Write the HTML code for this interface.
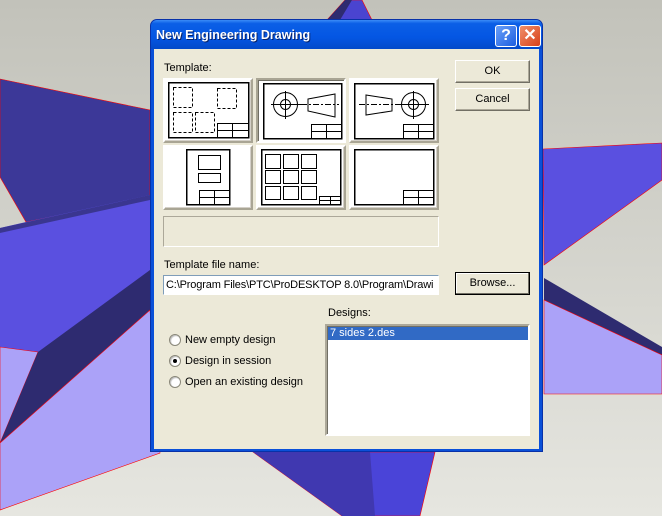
<!DOCTYPE html>
<html><head><meta charset="utf-8"><style>
*{margin:0;padding:0;box-sizing:border-box}
body{width:662px;height:516px;overflow:hidden;position:relative;font-family:"Liberation Sans",sans-serif;font-size:11px;color:#000;background:#cfcfc8}
.a{position:absolute}
.dlg{left:150px;top:19px;width:393px;height:433px;background:#0a50d8;border-radius:7px 7px 0 0;border:1px solid #0831a8}
.client{left:3px;top:29px;width:385px;height:400px;background:#ece9d8}
.title{left:0;top:0;width:391px;height:29px;border-radius:6px 6px 0 0;background:linear-gradient(#3b8cf7 0,#0b5fe6 12%,#0456e3 60%,#0349c9 100%)}
.title span{position:absolute;left:5px;top:8px;color:#fff;font-weight:bold;font-size:12.5px;text-shadow:1px 1px 0 #0a246a}
.tb{top:5px;width:22px;height:22px;border:1px solid #fff;border-radius:3px;color:#fff;font-weight:bold;text-align:center;font-size:16px;line-height:20px}
.tile{background:#fff;border:2px solid;border-color:#fff #a9a594 #a9a594 #fff;box-shadow:inset -1px -1px 0 #d4d0c8}
.tile.sel{border-color:#a9a594 #fff #fff #a9a594;box-shadow:inset 1px 1px 0 #716f64}
.btn{background:#ece9d8;border:1px solid;border-color:#fff #716f64 #716f64 #fff;box-shadow:inset -1px -1px 0 #aca899;text-align:center;line-height:20px}
.sunk{border:1px solid;border-color:#aca899 #fff #fff #aca899}
.rad{width:12px;height:12px;border-radius:50%;background:#fff;border:1px solid #8a887a;box-shadow:inset 1px 1px 1px #bbb}
</style></head><body>
<svg class="a" style="left:0;top:0" width="662" height="516">
<defs><linearGradient id="g" x1="0" y1="0" x2="0" y2="1"><stop offset="0" stop-color="#c2c2ba"/><stop offset="1" stop-color="#e6e6e0"/></linearGradient></defs>
<rect width="662" height="516" fill="url(#g)"/>
<polygon points="0,79 150,110 150,197 26,222 0,177" fill="#3c3898" stroke="#f00" stroke-width="0.6"/>
<polygon points="0,228 26,222 150,195 150,455 0,510" fill="#5a50e0"/>
<polygon points="0,228 150,195 150,200 0,233" fill="#3a3690"/>
<polygon points="0,347 38,352 0,443" fill="#aba2f8" stroke="#f00" stroke-width="0.6"/>
<polygon points="38,352 150,270 150,310 0,443" fill="#2e2b70"/>
<polygon points="0,443 150,310 160,453 0,510" fill="#aba2f8" stroke="#f00" stroke-width="0.6"/>
<polygon points="543,149 662,143 662,180 544,265" fill="#5a50e0" stroke="#f00" stroke-width="0.6"/>
<polygon points="544,278 662,347 662,357 544,300" fill="#2e2b70"/>
<polygon points="544,300 662,355 662,394 544,394" fill="#aba2f8" stroke="#f00" stroke-width="0.6"/>
<polygon points="327,20 345,0 362,0 372,20" fill="#4a44d0" stroke="#f00" stroke-width="0.6"/>
<polygon points="327,20 345,0 352,0 340,20" fill="#2e2b70"/>
<polygon points="253,452 435,452 420,516 342,516" fill="#4a44d8" stroke="#f00" stroke-width="0.6"/>
<polygon points="253,452 370,452 375,516 342,516" fill="#4038b0"/>
</svg>
<div class="a dlg">
 <div class="a title"><span>New Engineering Drawing</span>
  <div class="a tb" style="left:344px;background:linear-gradient(135deg,#6aa0f8,#1d5ee0)">?</div>
  <div class="a tb" style="left:368px;background:linear-gradient(135deg,#f0906a,#d8401a)">✕</div>
 </div>
 <div class="a client"></div>
</div>
<div class="a" style="left:164px;top:62px">Template:</div>
<div class="a tile" style="left:163px;top:78px;width:90px;height:65px"></div>
<div class="a tile sel" style="left:256px;top:78px;width:90px;height:65px"></div>
<div class="a tile" style="left:349px;top:78px;width:90px;height:65px"></div>
<div class="a tile" style="left:163px;top:145px;width:90px;height:65px"></div>
<div class="a tile" style="left:256px;top:145px;width:90px;height:65px"></div>
<div class="a tile" style="left:349px;top:145px;width:90px;height:65px"></div>
<svg class="a" style="left:0;top:0" width="662" height="516" fill="none" stroke="#000" stroke-width="1" shape-rendering="crispEdges">
<rect x="168.5" y="82.5" width="80" height="55" stroke-width="1.5"/>
<g stroke-dasharray="3,2"><rect x="173.5" y="87.5" width="19" height="20"/><rect x="217.5" y="88.5" width="19" height="20"/><rect x="173.5" y="112.5" width="19" height="20"/><rect x="195.5" y="112.5" width="19" height="20"/></g>
<rect x="217.5" y="123.5" width="31" height="14"/><path d="M232.5 123v14M217 130.5h31"/>
<rect x="263.5" y="83.5" width="78" height="55" stroke-width="1.5"/>
<g shape-rendering="auto"><circle cx="285.5" cy="104.5" r="12"/><circle cx="285.5" cy="104.5" r="5"/>
<polygon points="308,99 335,94 335,117 308,111"/>
<circle cx="413.5" cy="104.5" r="12"/><circle cx="413.5" cy="104.5" r="5"/>
<polygon points="366,95 392,99 392,111 366,115"/></g>
<path d="M271 104.5h30M285.5 91v28" /><path d="M301 104.5h38" stroke-dasharray="6,2,2,2"/>
<rect x="311.5" y="124.5" width="30" height="14"/><path d="M326.5 124v14M311 131.5h30"/>
<rect x="354.5" y="83.5" width="79" height="55" stroke-width="1.5"/>
<path d="M399 104.5h30M413.5 91v28"/><path d="M359 104.5h40" stroke-dasharray="6,2,2,2"/>
<rect x="403.5" y="124.5" width="30" height="14"/><path d="M418.5 124v14M403 131.5h30"/>
<rect x="186.5" y="149.5" width="43" height="55" stroke-width="1.5"/>
<rect x="198.5" y="155.5" width="22" height="14"/><rect x="198.5" y="173.5" width="22" height="9"/>
<rect x="199.5" y="190.5" width="30" height="14"/><path d="M214.5 190v14M199 197.5h30"/>
<rect x="261.5" y="149.5" width="79" height="55" stroke-width="1.5"/>
<rect x="265.5" y="154.5" width="15" height="14"/><rect x="283.5" y="154.5" width="15" height="14"/><rect x="301.5" y="154.5" width="15" height="14"/>
<rect x="265.5" y="170.5" width="15" height="13"/><rect x="283.5" y="170.5" width="15" height="13"/><rect x="301.5" y="170.5" width="15" height="13"/>
<rect x="265.5" y="186.5" width="15" height="13"/><rect x="283.5" y="186.5" width="15" height="13"/><rect x="301.5" y="186.5" width="15" height="13"/>
<rect x="319.5" y="196.5" width="21" height="8"/><path d="M330.5 196v8M319 200.5h21"/>
<rect x="354.5" y="149.5" width="79" height="55" stroke-width="1.5"/>
<rect x="403.5" y="190.5" width="30" height="14"/><path d="M418.5 190v14M403 197.5h30"/>
</svg>
<div class="a sunk" style="left:163px;top:216px;width:276px;height:31px"></div>
<div class="a btn" style="left:455px;top:60px;width:75px;height:23px">OK</div>
<div class="a btn" style="left:455px;top:88px;width:75px;height:23px">Cancel</div>
<div class="a" style="left:164px;top:259px">Template file name:</div>
<div class="a sunk" style="left:163px;top:275px;width:276px;height:20px;background:#fff;border-color:#7f9db9 #fff #fff #7f9db9;padding:3px 0 0 2px;white-space:nowrap;overflow:hidden;letter-spacing:-0.15px">C:\Program Files\PTC\ProDESKTOP 8.0\Program\Drawi</div>
<div class="a btn" style="left:455px;top:272px;width:75px;height:23px;border:1px solid #000;box-shadow:inset -1px -1px 0 #716f64,inset 1px 1px 0 #fff;line-height:21px">Browse...</div>
<div class="a" style="left:328px;top:307px">Designs:</div>
<div class="a" style="left:325px;top:324px;width:205px;height:112px;background:#fff;border:2px solid;border-color:#aca899 #fff #fff #aca899;box-shadow:inset 1px 1px 0 #716f64">
 <div style="background:#316ac5;color:#fff;height:13px;line-height:13px;padding-left:2px;margin:1px 0 0 1px">7 sides 2.des</div>
</div>
<div class="a rad" style="left:169px;top:334px"></div>
<div class="a rad" style="left:169px;top:355px"><div style="position:absolute;left:3px;top:3px;width:4px;height:4px;border-radius:50%;background:#000"></div></div>
<div class="a rad" style="left:169px;top:376px"></div>
<div class="a" style="left:185px;top:334px">New empty design</div>
<div class="a" style="left:185px;top:355px">Design in session</div>
<div class="a" style="left:185px;top:376px">Open an existing design</div>
</body></html>
